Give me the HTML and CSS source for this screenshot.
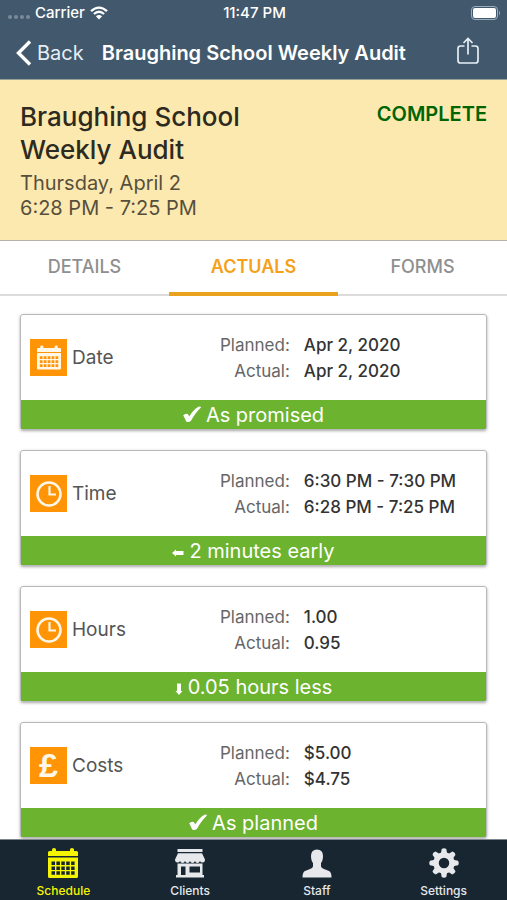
FILE: index.html
```html
<!DOCTYPE html>
<html lang="en">
<head>
<meta charset="utf-8">
<meta name="viewport" content="width=device-width, initial-scale=1">
<title>Braughing School Weekly Audit</title>
<link rel="stylesheet" href="styles.css">
</head>
<body>
<svg class="sprite" aria-hidden="true">
  <symbol id="calendar" viewBox="0 0 30 30">
    <path fill="currentColor" fill-rule="evenodd" d="M0 4.500Q0 3 1.500 3H4V1.500a2 1.500 0 0 1 4 0V3H22V1.500a2 1.500 0 0 1 4 0V3H28.500Q30 3 30 4.500V8H0ZM0 9.500H30V28.500Q30 30 28.500 30H1.500Q0 30 0 28.500ZM3.500 13.500V17H7V13.500ZM8.400 13.500V17H11.900V13.500ZM13.300 13.500V17H16.800V13.500ZM18.200 13.500V17H21.700V13.500ZM23.100 13.500V17H26.600V13.500ZM3.500 18.400V21.900H7V18.400ZM8.400 18.400V21.900H11.900V18.400ZM13.300 18.400V21.900H16.800V18.400ZM18.200 18.400V21.900H21.700V18.400ZM23.100 18.400V21.900H26.600V18.400ZM3.500 23.300V26.800H7V23.300ZM8.400 23.300V26.800H11.900V23.300ZM13.300 23.300V26.800H16.800V23.300ZM18.200 23.300V26.800H21.700V23.300ZM23.100 23.300V26.800H26.600V23.300Z"/>
  </symbol>
  <symbol id="clock" viewBox="0 0 26 26">
    <circle cx="13" cy="13" r="11.500" fill="none" stroke="currentColor" stroke-width="2.500"/>
    <path d="M13.500 5V13.500H20" fill="none" stroke="currentColor" stroke-width="2.200"/>
  </symbol>
  <symbol id="check" viewBox="0 0 18 17">
    <path fill="currentColor" d="M.2 9.300Q2.300 7 4.500 8Q5.700 8.700 6.200 10.500Q10.500 3.500 15.500 .8Q17.800 0 18 1.500Q12.500 6.500 8 14.800Q5.500 17 3.200 15.500Q1.600 12 .2 9.300Z"/>
  </symbol>
  <symbol id="arrow" viewBox="0 0 12 8">
    <path fill="currentColor" d="M0 4L4 .5V2H11.500V6H4V7.500Z"/>
  </symbol>
</svg>

<header class="top">
  <div class="status">
    <div class="carrier">
      <span class="dots"><i></i><i></i><i></i><i></i></span>
      <span>Carrier</span>
      <svg class="wifi" viewBox="0 0 18 14" aria-hidden="true">
        <path d="M1 5.200Q9-2 17 5.200M3.900 8Q9 3.600 14.100 8" fill="none" stroke="#fff" stroke-width="2.300"/>
        <path d="M5.900 10.200Q9 7.600 12.100 10.200L9 13.500Z" fill="#fff"/>
      </svg>
    </div>
    <time>11:47 PM</time>
    <svg class="battery" viewBox="0 0 30 14" aria-hidden="true">
      <rect x=".5" y=".5" width="26" height="13" rx="3.500" fill="none" stroke="#9badbb"/>
      <rect x="2" y="2" width="23" height="10" rx="2" fill="#fff"/>
      <path d="M28 4.500Q30 7 28 9.500Z" fill="#9badbb"/>
    </svg>
  </div>
  <div class="nav">
    <button class="back" type="button">
      <svg viewBox="0 0 16 26" aria-hidden="true"><path d="M14 1.500L2.500 13L14 24.500" fill="none" stroke="currentColor" stroke-width="3.400"/></svg>
      <span>Back</span>
    </button>
    <h1>Braughing School Weekly Audit</h1>
    <button class="share" type="button" aria-label="Share">
      <svg viewBox="0 0 22 28" aria-hidden="true"><path d="M7.500 9H3.500Q1 9 1 11.500V23.500Q1 26 3.500 26H18.500Q21 26 21 23.500V11.500Q21 9 18.500 9H14.500M11 17.500V1.500M6.500 6L11 1.500L15.500 6" fill="none" stroke="currentColor" stroke-width="1.700"/></svg>
    </button>
  </div>
</header>

<section class="summary">
  <div>
    <h2>Braughing School Weekly Audit</h2>
    <p>Thursday, April 2</p>
    <p>6:28 PM - 7:25 PM</p>
  </div>
  <strong class="state">COMPLETE</strong>
</section>

<nav class="tabs">
  <a href="#details">DETAILS</a>
  <a href="#actuals" class="active">ACTUALS</a>
  <a href="#forms">FORMS</a>
</nav>

<main class="cards">
  <article class="card">
    <div class="body">
      <span class="badge"><svg class="calendar-icon"><use href="#calendar"/></svg></span>
      <h3>Date</h3>
      <dl><dt>Planned:</dt><dd>Apr 2, 2020</dd><dt>Actual:</dt><dd>Apr 2, 2020</dd></dl>
    </div>
    <p class="result"><svg class="check"><use href="#check"/></svg>As promised</p>
  </article>
  <article class="card">
    <div class="body">
      <span class="badge"><svg class="clock-icon"><use href="#clock"/></svg></span>
      <h3>Time</h3>
      <dl><dt>Planned:</dt><dd>6:30 PM - 7:30 PM</dd><dt>Actual:</dt><dd>6:28 PM - 7:25 PM</dd></dl>
    </div>
    <p class="result"><svg class="arrow"><use href="#arrow"/></svg>2 minutes early</p>
  </article>
  <article class="card">
    <div class="body">
      <span class="badge"><svg class="clock-icon"><use href="#clock"/></svg></span>
      <h3>Hours</h3>
      <dl><dt>Planned:</dt><dd>1.00</dd><dt>Actual:</dt><dd>0.95</dd></dl>
    </div>
    <p class="result"><svg class="arrow-down" viewBox="0 0 8 12"><path fill="currentColor" d="M4 12L.5 8H2V.5H6V8H7.500Z"/></svg>0.05 hours less</p>
  </article>
  <article class="card">
    <div class="body">
      <span class="badge pound">£</span>
      <h3>Costs</h3>
      <dl><dt>Planned:</dt><dd>$5.00</dd><dt>Actual:</dt><dd>$4.75</dd></dl>
    </div>
    <p class="result"><svg class="check"><use href="#check"/></svg>As planned</p>
  </article>
</main>

<nav class="tabbar">
  <a href="#schedule" class="active"><svg><use href="#calendar"/></svg>Schedule</a>
  <a href="#clients"><svg viewBox="0 0 30 30" aria-hidden="true"><path fill="currentColor" fill-rule="evenodd" d="M2.500 1H27.500V4H2.500ZM3 5.200H27L30 11.500Q30 14.500 27.600 14.500Q25.500 14.500 25 13Q24.300 15 22.500 15Q20.600 15 20 13Q19.300 15 17.500 15Q15.600 15 15 13Q14.400 15 12.500 15Q10.700 15 10 13Q9.400 15 7.500 15Q5.700 15 5 13Q4.500 14.500 2.400 14.500Q0 14.500 0 11.500ZM2.500 15.500H27.500V27H29V29.500H1V27H2.500ZM6 18.500V27H10.500V18.500ZM14.500 18.500V24.500H25V18.500ZM15.500 19.500H24V23.500H15.500ZM16.500 20.300V22.800H23V20.300Z"/><path d="M15 19H24.500V24H15Z" fill="#172631"/></svg>Clients</a>
  <a href="#staff"><svg viewBox="0 0 30 30" aria-hidden="true"><path fill="currentColor" d="M15 1.500Q21 1.500 21 8Q21 10 20.500 12Q20 14 19 15V18.500Q19.500 20 22 21L27 23Q29.500 24 29.500 29.500H.5Q.5 24 3 23L8 21Q10.500 20 11 18.500V15Q10 14 9.500 12Q9 10 9 8Q9 1.500 15 1.500Z"/></svg>Staff</a>
  <a href="#settings"><svg viewBox="0 0 30 30" aria-hidden="true"><g fill="currentColor"><path id="tooth" d="M11.800 6L12.700 1Q15-.5 17.300 1L18.200 6ZM11.800 24L12.700 29Q15 30.500 17.300 29L18.200 24Z"/><use href="#tooth" transform="rotate(45 15 15)"/><use href="#tooth" transform="rotate(90 15 15)"/><use href="#tooth" transform="rotate(135 15 15)"/></g><circle cx="15" cy="15" r="8" fill="none" stroke="currentColor" stroke-width="5.500"/></svg>Settings</a>
</nav>
</body>
</html>
```
FILE: styles.css
```css
* { box-sizing: border-box; margin: 0; padding: 0; }

body {
  display: flex;
  flex-direction: column;
  height: 100vh;
  font-family: Inter, "Liberation Sans", sans-serif;
  background: #fff;
  color: #333;
}

button { font: inherit; color: inherit; background: none; border: 0; }
a { color: inherit; text-decoration: none; }
.sprite { display: none; }

.top {
  background: #42596d;
  color: #fff;
  border-bottom: 1px solid #98a093;
}

.status {
  display: grid;
  grid-template-columns: 1fr auto 1fr;
  align-items: center;
  height: 26px;
  padding: 0 6px 0 8px;
  font-size: 15px;
  line-height: 18px;
  font-weight: 500;
}
.carrier { display: flex; align-items: center; gap: 5px; }
.dots { display: flex; gap: 2px; padding-top: 8px; }
.dots i { width: 4px; height: 4px; border-radius: 50%; background: #7a8c9a; }
.wifi { width: 18px; height: 14px; }
.battery { width: 30px; height: 14px; justify-self: end; }

.nav {
  display: flex;
  align-items: center;
  height: 53px;
  padding: 0 28px 0 16px;
}
.back {
  display: flex;
  align-items: center;
  gap: 5px;
  font-size: 20px;
}
.back svg { width: 16px; height: 26px; }
.back span { color: #e6eef5; }
.nav h1 {
  margin-left: 18px;
  font-size: 20px;
  font-weight: 600;
  white-space: nowrap;
}
.share { margin-left: auto; color: #e6eef5; }
.share svg { display: block; width: 22px; height: 28px; margin-bottom: 4px; }

.summary {
  display: flex;
  justify-content: space-between;
  gap: 20px;
  padding: 20px 20px 19px;
  background: #fce9b0;
  border-bottom: 1px solid #b5b1a8;
}
.summary > div { max-width: 260px; }
.summary h2 {
  margin-bottom: 5px;
  font-size: 26px;
  line-height: 33px;
  font-weight: 500;
  color: #2d2a20;
}
.summary p { font-size: 20px; line-height: 25px; color: #574f3c; }
.state {
  font-size: 20px;
  line-height: 28px;
  font-weight: 600;
  color: #006400;
}

.tabs { display: grid; grid-template-columns: repeat(3, 1fr); }
.tabs a {
  height: 55px;
  border-bottom: 2px solid #dcdcdc;
  font-size: 18px;
  line-height: 52px;
  font-weight: 500;
  text-align: center;
  color: #8f8f8f;
}
.tabs .active { border-bottom: 4px solid #eaa21e; color: #f5a11a; font-weight: 600; }

.cards {
  flex: 1;
  min-height: 0;
  overflow-y: auto;
  scrollbar-width: none;
  display: flex;
  flex-direction: column;
  gap: 20px;
  padding: 18px 20px;
}
.card {
  flex: none;
  border: 1px solid #b9b9b9;
  border-radius: 3px;
  box-shadow: 0 1px 3px rgba(0, 0, 0, .35);
}
.body {
  display: grid;
  grid-template-columns: auto 1fr 266px;
  align-items: center;
  height: 85px;
  padding-left: 9px;
}
.badge {
  display: grid;
  place-items: center;
  width: 37px;
  height: 37px;
  background: #ff9407;
  color: #fff8e8;
}
.calendar-icon { width: 24px; height: 25px; }
.clock-icon { width: 26px; height: 26px; }
.pound {
  font-family: "Liberation Sans", sans-serif;
  font-size: 34px;
  line-height: 37px;
  font-weight: 700;
}
.body h3 { margin-left: 5px; font-size: 19px; font-weight: 400; color: #555; }
.body dl {
  display: grid;
  grid-template-columns: auto 1fr;
  justify-items: start;
  column-gap: 14px;
  font-size: 17px;
  line-height: 26px;
  white-space: nowrap;
}
.body dt { justify-self: end; color: #666; }
.body dd { font-weight: 500; }
.result {
  display: flex;
  justify-content: center;
  align-items: center;
  gap: 5px;
  height: 29px;
  font-size: 20px;
  background: #6cb32f;
  color: #fff;
}
.check { width: 18px; height: 17px; }
.arrow { width: 12px; height: 8px; margin-top: 4px; }
.arrow-down { width: 8px; height: 12px; margin-top: 4px; }

.tabbar {
  display: grid;
  grid-template-columns: repeat(4, 1fr);
  height: 61px;
  border-top: 1px solid #7d868c;
  background: #172631;
  color: #e6e8ec;
}
.tabbar a {
  display: flex;
  flex-direction: column;
  align-items: center;
  gap: 5px;
  padding-top: 8px;
  font-size: 12px;
  line-height: 15px;
  font-weight: 500;
}
.tabbar svg { width: 30px; height: 30px; }
.tabbar .active { color: #f6f500; }
```
